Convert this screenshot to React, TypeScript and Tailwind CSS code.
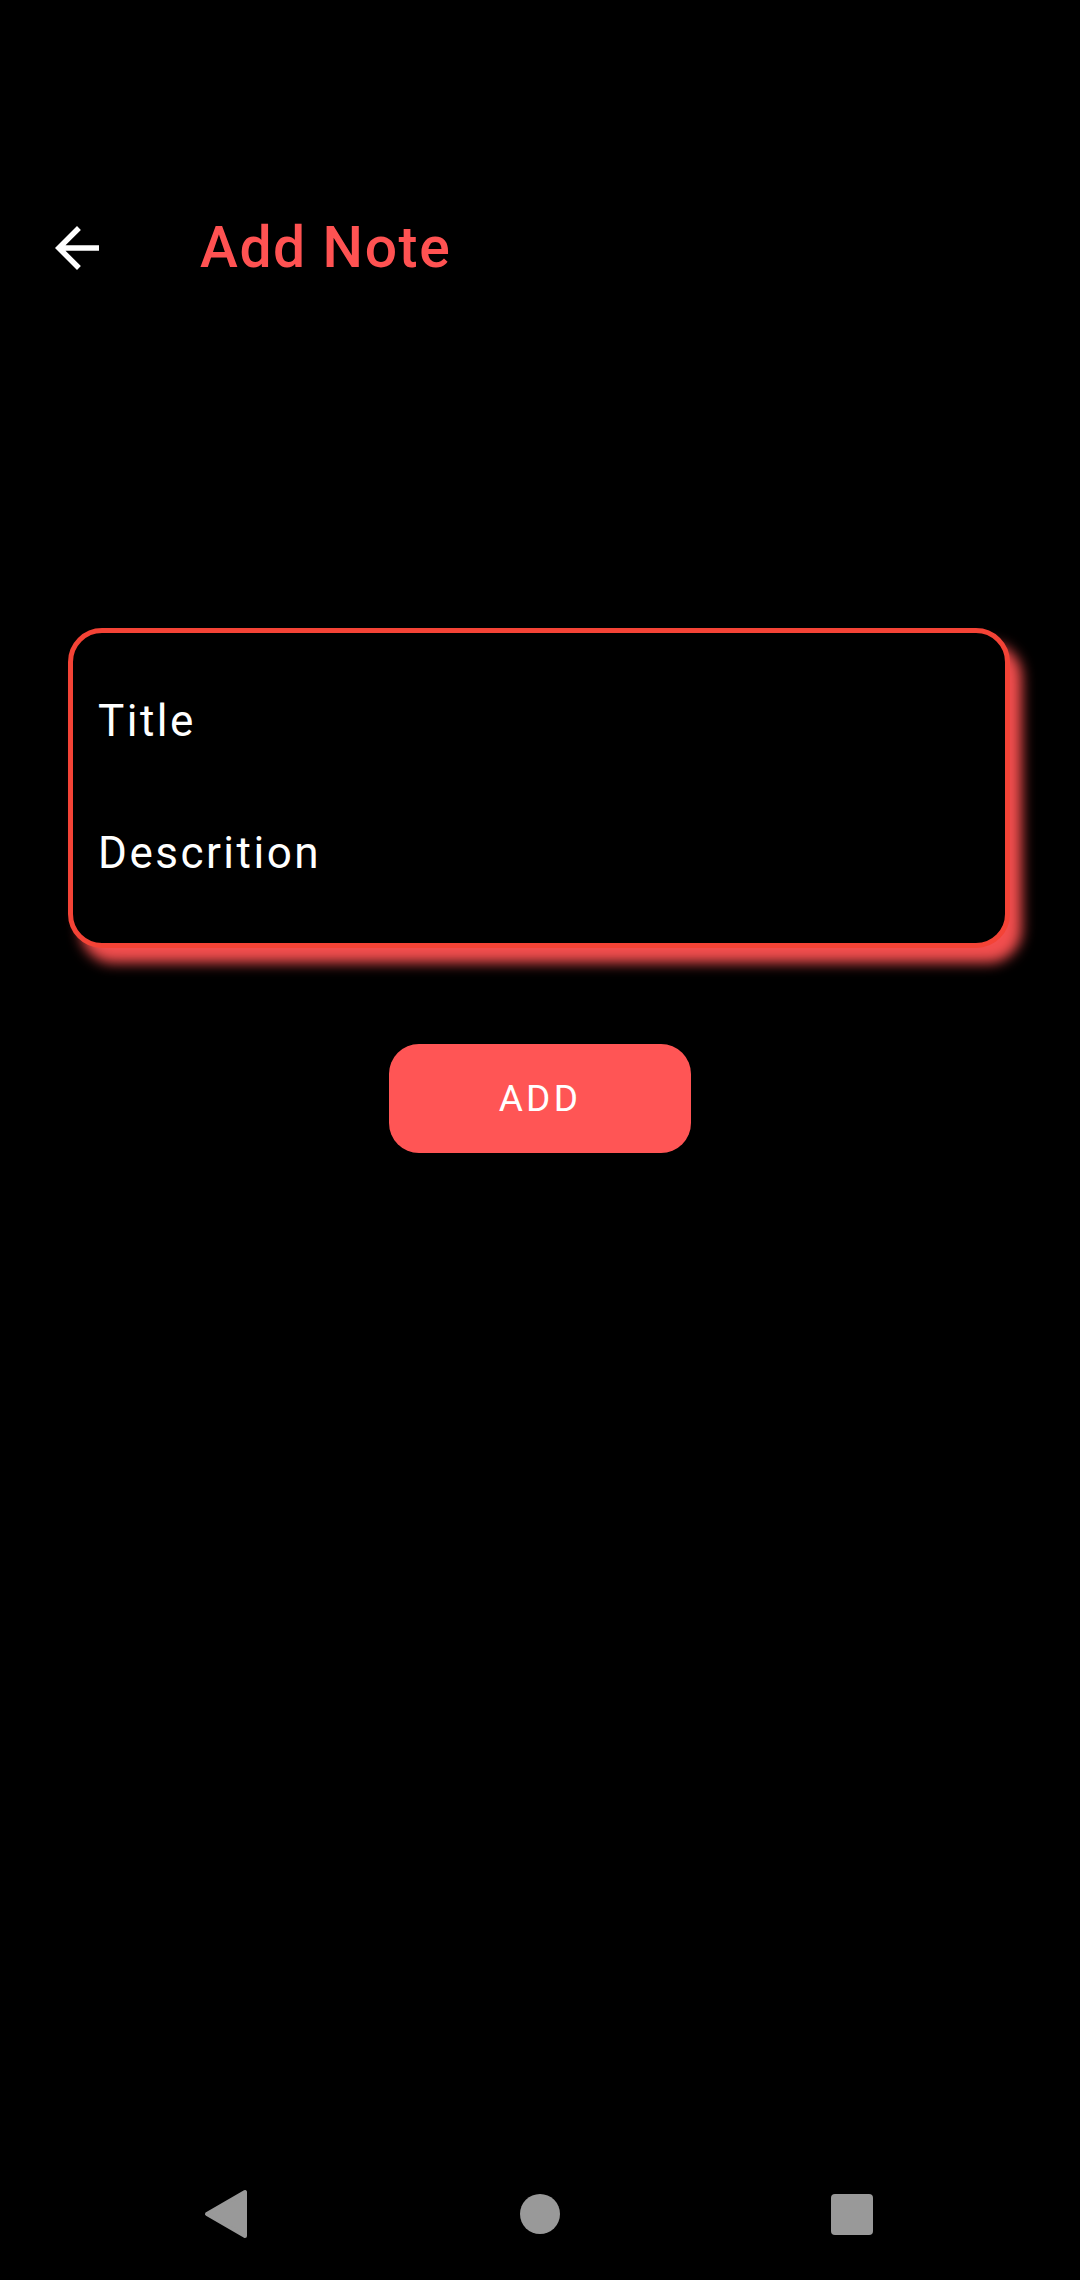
export default function App() {
  return (
    <div className="w-[1080px] h-[2280px] bg-black flex flex-col font-['Roboto',sans-serif]">
      {/* top bar */}
      <div className="mt-[188px] h-[120px] pl-[44px] flex items-center">
        <svg width="66" height="66" viewBox="0 0 24 24" fill="#ffffff">
          <path d="M20 11H7.83l5.59-5.59L12 4l-8 8 8 8 1.41-1.41L7.83 13H20v-2z" />
        </svg>
        <h1 className="ml-[90px] text-[57px] leading-[68px] font-medium tracking-[1.6px] text-[#ff5252]">
          Add Note
        </h1>
      </div>

      {/* note card */}
      <div className="mt-[320px] ml-[68px] w-[942px] h-[320px] border-[5px] border-[#f44336] rounded-[34px] bg-black shadow-[12px_15px_13px_rgba(255,82,82,0.95)] px-[25px] pt-[62px] flex flex-col gap-[80px]">
        <div className="text-[44px] leading-[52px] text-white tracking-[2.5px]">Title</div>
        <div className="text-[44px] leading-[52px] text-white tracking-[2.5px]">Descrition</div>
      </div>

      {/* add button */}
      <div className="mt-[96px] flex justify-center">
        <button className="w-[302px] h-[109px] rounded-[30px] bg-[#ff5555] text-white text-[37px] tracking-[3.3px] font-normal">
          ADD
        </button>
      </div>

      <div className="flex-1" />

      {/* navigation bar */}
      <div className="h-[132px] flex justify-center items-center">
        <div className="w-[936px] grid grid-cols-3 items-center">
          <div className="flex justify-center items-center">
            <svg width="44" height="50" viewBox="0 0 44 50" className="-ml-[4px]">
              <path d="M41 3 L41 47 L3 25 Z" fill="#999999" stroke="#999999" strokeWidth="4" strokeLinejoin="round" />
            </svg>
          </div>
          <div className="flex justify-center items-center">
            <div className="w-[40px] h-[40px] rounded-full bg-[#999999]" />
          </div>
          <div className="flex justify-center items-center">
            <div className="w-[42px] h-[41px] rounded-[4px] bg-[#999999]" />
          </div>
        </div>
      </div>
    </div>
  )
}
